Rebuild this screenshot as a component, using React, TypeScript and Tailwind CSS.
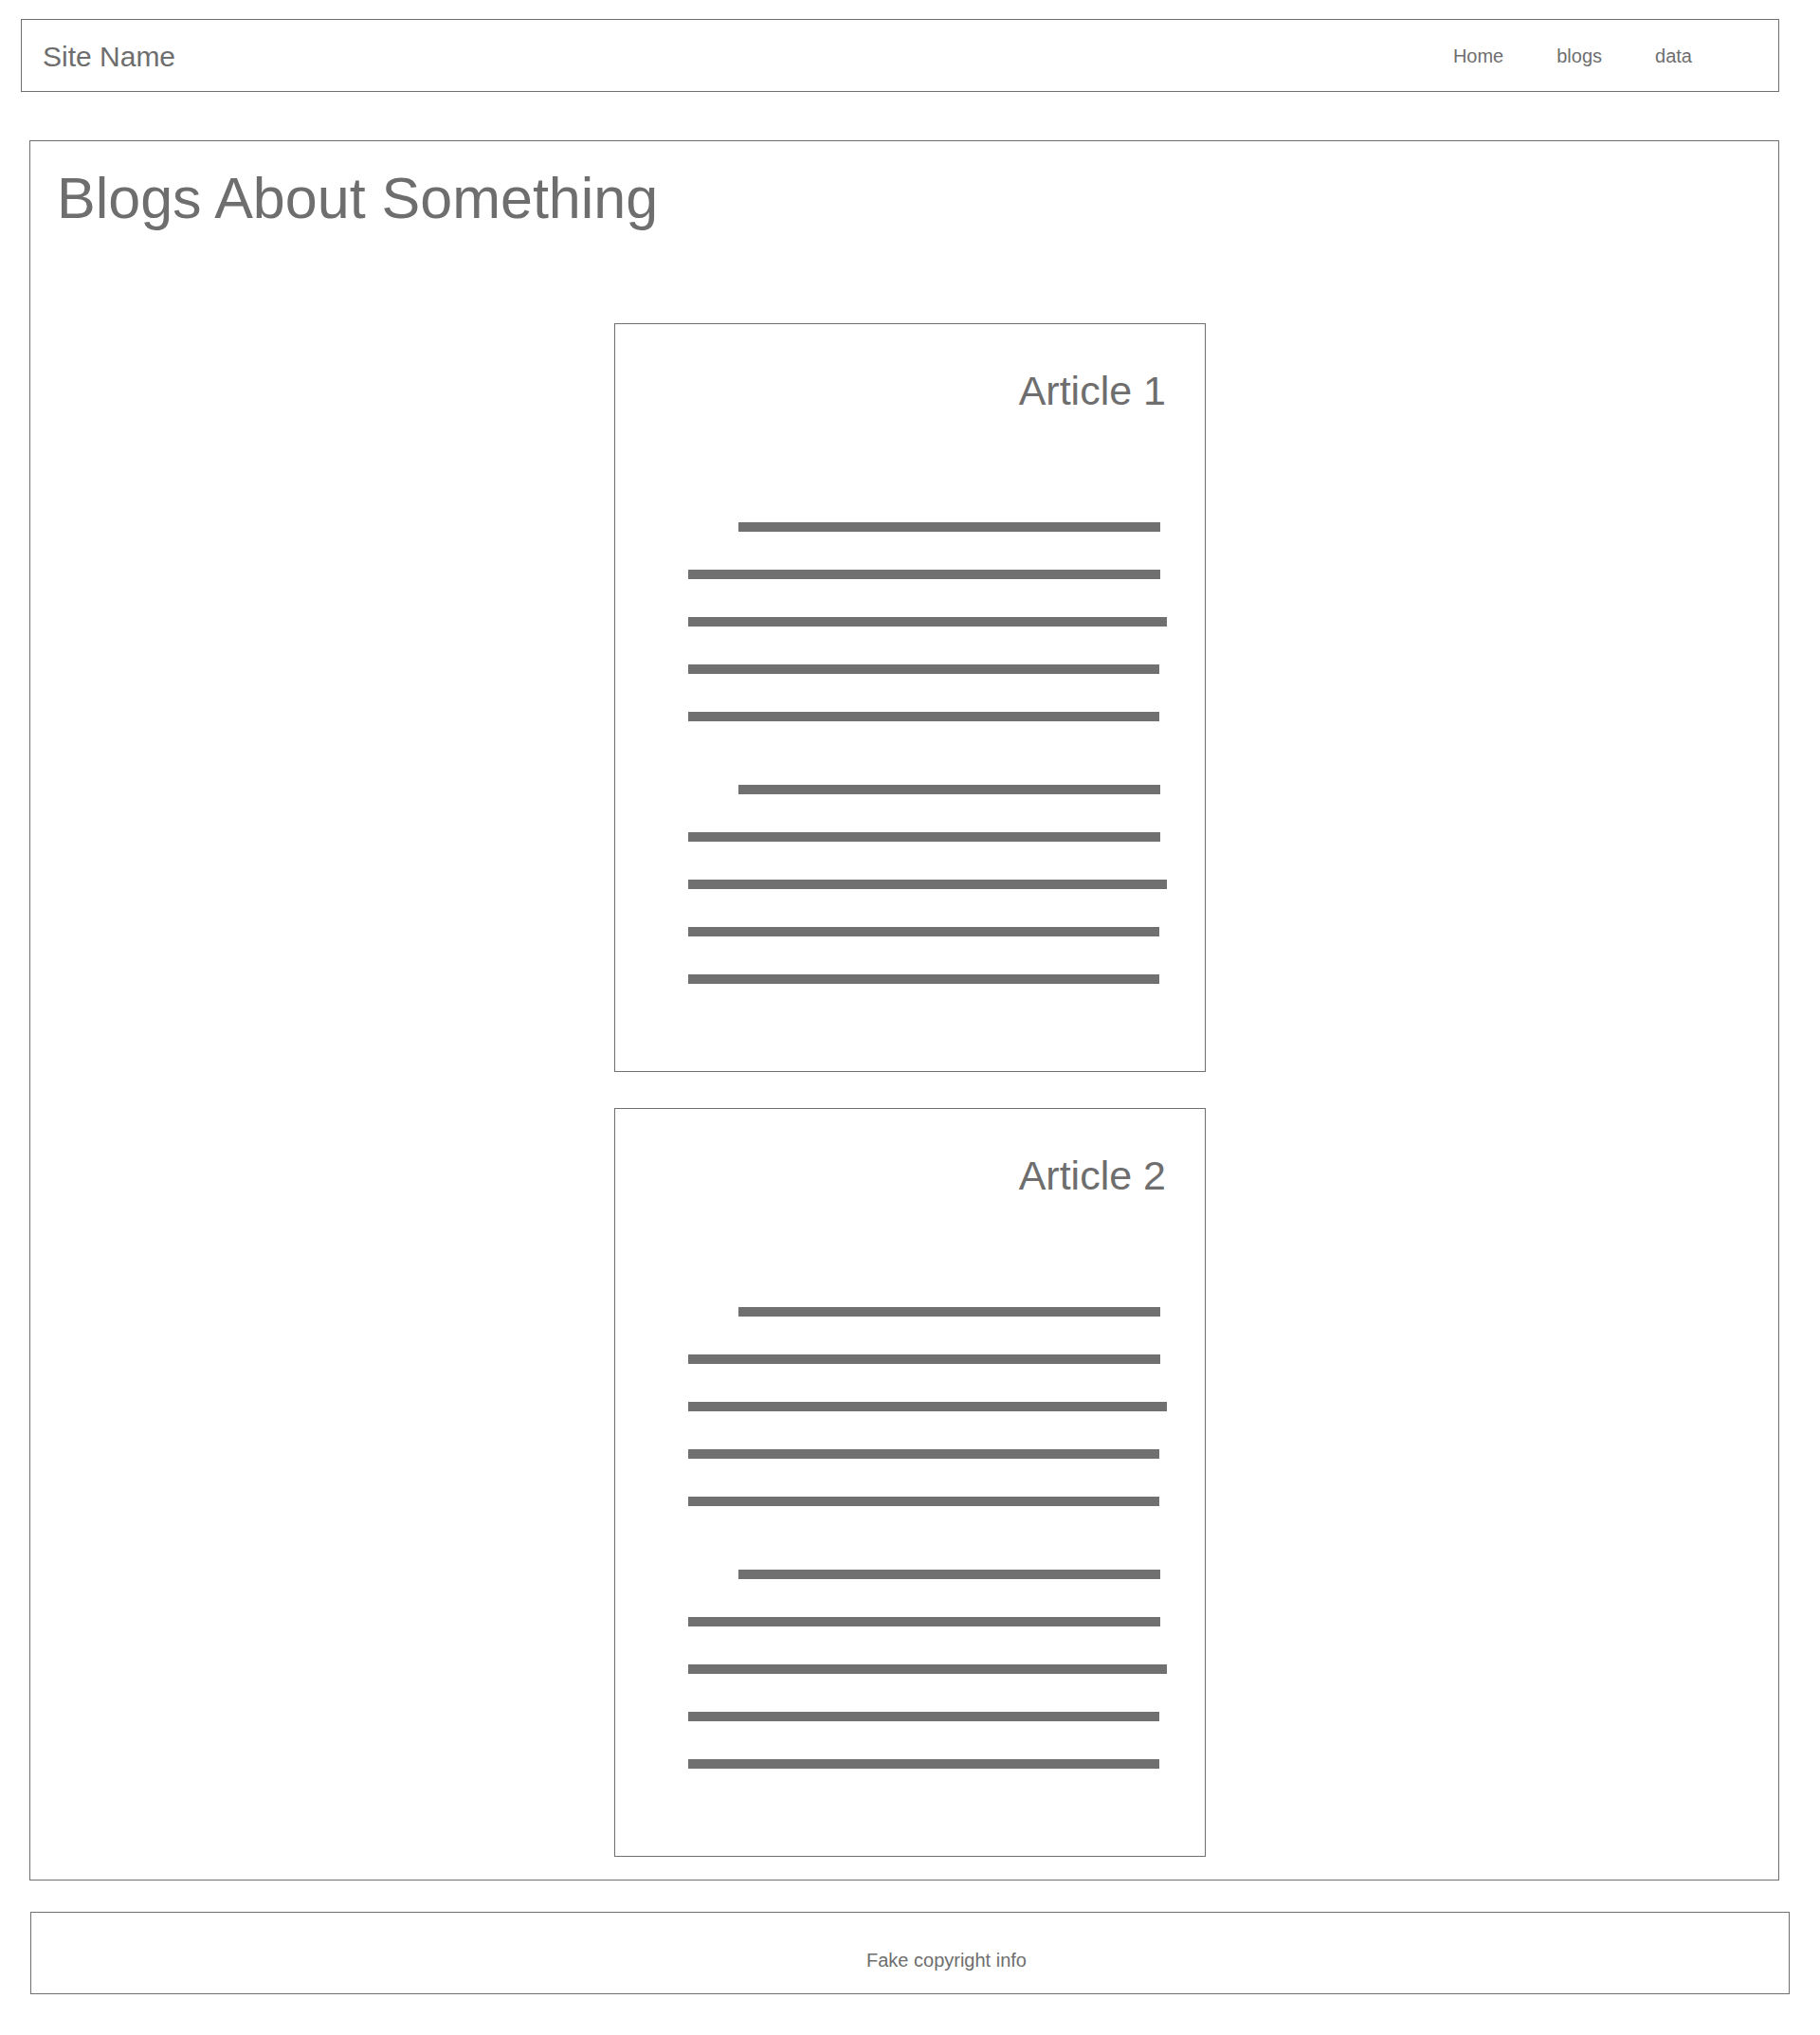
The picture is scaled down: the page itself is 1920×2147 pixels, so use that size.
import React from "react";

const NAV_LINKS = ["Home", "blogs", "data"];

// each paragraph: first line indented, third line a touch longer
const PARAGRAPH = [
  "ml-[130px] w-[445px]",
  "ml-[77px] w-[498px]",
  "ml-[77px] w-[505px]",
  "ml-[77px] w-[497px]",
  "ml-[77px] w-[497px]",
];

function Paragraph() {
  return (
    <div className="flex flex-col gap-[40px]">
      {PARAGRAPH.map((cls, i) => (
        <div key={i} className={`h-[10px] bg-[#707070] ${cls}`} />
      ))}
    </div>
  );
}

function ArticleCard({ title }: { title: string }) {
  return (
    <div className="ml-[588px] flex h-[790px] w-[624px] flex-col border border-[#707070]">
      <h2 className="pt-[49px] pr-[41px] text-right text-[43px] leading-none text-[#6e6e6e]">
        {title}
      </h2>
      <div className="mt-[117px] flex flex-col gap-[67px]">
        <Paragraph />
        <Paragraph />
      </div>
    </div>
  );
}

export default function App() {
  return (
    <div className="min-h-screen w-full bg-white pt-[20px] font-['Liberation_Sans',Arial,sans-serif] text-[#6e6e6e]">
      {/* Header */}
      <header className="ml-[22px] flex h-[77px] w-[1855px] items-center justify-between border border-[#707070] pl-[22px] pr-[91px]">
        <span className="pt-[2px] text-[30px] leading-none">Site Name</span>
        <nav className="flex gap-[56px] text-[20px] leading-none">
          {NAV_LINKS.map((link) => (
            <a key={link} href="#">
              {link}
            </a>
          ))}
        </nav>
      </header>

      {/* Main */}
      <main className="mt-[51px] ml-[31px] flex h-[1836px] w-[1846px] flex-col border border-[#707070] pt-[30px] pl-[28px]">
        <h1 className="text-[61px] leading-none">Blogs About Something</h1>
        <div className="mt-[101px] flex flex-col gap-[38px]">
          <ArticleCard title="Article 1" />
          <ArticleCard title="Article 2" />
        </div>
      </main>

      {/* Footer */}
      <footer className="mt-[33px] ml-[32px] flex h-[87px] w-[1856px] justify-center border border-[#707070] pt-[40px] pl-[77px]">
        <span className="text-[20px] leading-none">Fake copyright info</span>
      </footer>
    </div>
  );
}
